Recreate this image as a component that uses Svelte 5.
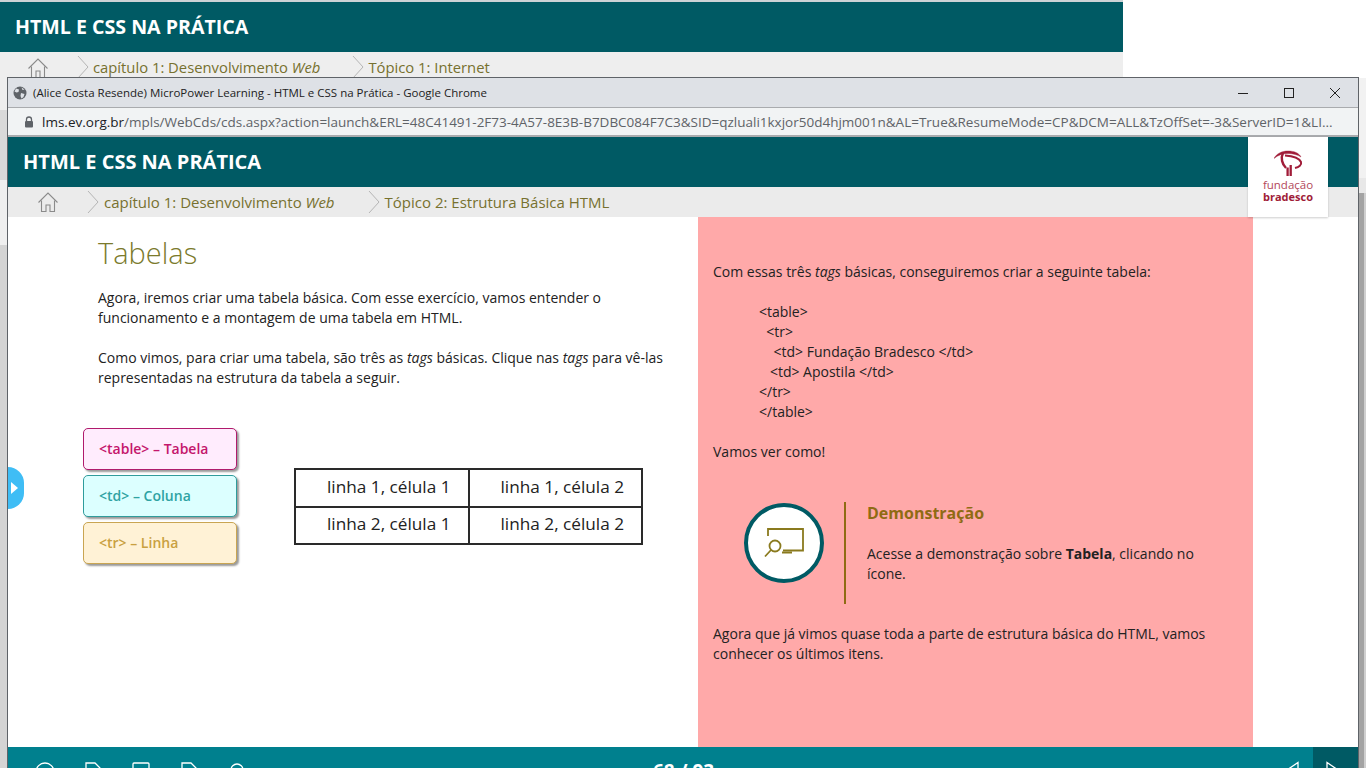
<script>
  const tags = [
    { label: "<table> – Tabela", kind: "pink" },
    { label: "<td> – Coluna", kind: "cyan" },
    { label: "<tr> – Linha", kind: "sand" }
  ];

  const rows = [
    ["linha 1, célula 1", "linha 1, célula 2"],
    ["linha 2, célula 1", "linha 2, célula 2"]
  ];

  const url =
    "/mpls/WebCds/cds.aspx?action=launch&ERL=48C41491-2F73-4A57-8E3B-B7DBC084F7C3&SID=qzluali1kxjor50d4hjm001n&AL=True&ResumeMode=CP&DCM=ALL&TzOffSet=-3&ServerID=1&LI...";
</script>

{#snippet home()}
  <svg class="home" width="22" height="22" viewBox="0 0 22 22" fill="none" stroke="#8a8a8a" stroke-width="1.1">
    <path d="M1.5 11.5 11 2l9.500 9.500" />
    <path d="M4.500 9.500V20.500h4.500v-6.500h4v6.500h4.500V9.500" />
  </svg>
{/snippet}

{#snippet chevron()}
  <svg class="chev" width="12" height="24" viewBox="0 0 12 24" fill="none" stroke="#b5b5b5" stroke-width="1">
    <path d="M1 1l10 11L1 23" />
  </svg>
{/snippet}

<div class="desktop">
  <div class="back-page">
    <header class="course back-course"><h1>HTML E CSS NA PRÁTICA</h1></header>
    <nav class="crumbs back-crumbs">
      {@render home()}
      {@render chevron()}
      <span>capítulo 1: Desenvolvimento <em>Web</em></span>
      {@render chevron()}
      <span>Tópico 1: Internet</span>
    </nav>
  </div>

  <div class="edge edge-left"></div>
  <div class="edge edge-right"></div>

  <section class="window">
    <div class="titlebar">
      <svg class="globe" width="14" height="14" viewBox="0 0 14 14">
        <circle cx="7" cy="7" r="6.500" fill="#5f6368" />
        <path d="M3 2.500l3 1-.5 2.500-2 .5-2-1zM8 7l3.500 1-1 3-2 1.500-1-2.500zM8.500 1.500l3 2-2 .5z" fill="#dee1e6" />
      </svg>
      <span class="title">(Alice Costa Resende) MicroPower Learning - HTML e CSS na Prática - Google Chrome</span>
      <div class="controls">
        <svg width="12" height="12" viewBox="0 0 12 12" stroke="#222" fill="none"><path d="M1 6.500h10" /></svg>
        <svg width="12" height="12" viewBox="0 0 12 12" stroke="#222" fill="none"><rect x="1.500" y="1.500" width="9" height="9" /></svg>
        <svg width="12" height="12" viewBox="0 0 12 12" stroke="#222" fill="none"><path d="M1 1l10 10M11 1L1 11" /></svg>
      </div>
    </div>

    <div class="addressbar">
      <svg width="10" height="12" viewBox="0 0 10 12">
        <path d="M2.500 5V3.500a2.500 2.500 0 0 1 5 0V5" fill="none" stroke="#5f6368" stroke-width="1.300" />
        <rect x="1" y="5" width="8" height="6.500" rx="1" fill="#5f6368" />
      </svg>
      <span class="url"><b>lms.ev.org.br</b>{url}</span>
    </div>

    <header class="course"><h1>HTML E CSS NA PRÁTICA</h1></header>
    <nav class="crumbs">
      {@render home()}
      {@render chevron()}
      <span>capítulo 1: Desenvolvimento <em>Web</em></span>
      {@render chevron()}
      <span>Tópico 2: Estrutura Básica HTML</span>
    </nav>

    <div class="logo">
      <svg width="29" height="26" viewBox="0 0 29 26" fill="none" stroke="#a01c38">
        <path d="M0 8.500C2.500 3.500 8 1 14 1c6 0 11 2 13 6-3-2-8-3.500-13-3.500-5 0-10 1.500-14 5z" fill="#a01c38" stroke-width=".4" />
        <path d="M9 3C6.500 8 8 14 12 18" stroke-width="2.400" />
        <path d="M11 5.500c7 .5 14 2 16 6.500 1 3-2 5-6 6" stroke-width="2" />
        <path d="M13.600 17.500V26M16.700 15v11" stroke-width="2.300" />
      </svg>
      <span class="logo-top">fundação</span>
      <span class="logo-bottom">bradesco</span>
    </div>

    <main class="content">
      <article class="lesson">
        <h2>Tabelas</h2>
        <p>
          Agora, iremos criar uma tabela básica. Com esse exercício, vamos entender o
          funcionamento e a montagem de uma tabela em HTML.
        </p>
        <p>
          Como vimos, para criar uma tabela, são três as <em>tags</em> básicas. Clique nas
          <em>tags</em> para vê-las representadas na estrutura da tabela a seguir.
        </p>

        <div class="exercise">
          <div class="tag-list">
            {#each tags as tag}
              <button class="tag {tag.kind}">{tag.label}</button>
            {/each}
          </div>
          <table>
            <tbody>
              {#each rows as row}
                <tr>
                  {#each row as cell}
                    <td>{cell}</td>
                  {/each}
                </tr>
              {/each}
            </tbody>
          </table>
        </div>
      </article>

      <aside class="panel">
        <p>Com essas três <em>tags</em> básicas, conseguiremos criar a seguinte tabela:</p>
        <pre class="code">&lt;table&gt;
  &lt;tr&gt;
    &lt;td&gt; Fundação Bradesco &lt;/td&gt;
   &lt;td&gt; Apostila &lt;/td&gt;
&lt;/tr&gt;
&lt;/table&gt;</pre>
        <p>Vamos ver como!</p>

        <div class="demo">
          <div class="demo-icon">
            <svg width="40" height="30" viewBox="0 0 40 30" fill="none" stroke="#8a7a1e" stroke-width="1.800">
              <path d="M4 8V1h35v21.500H19" />
              <circle cx="11" cy="18" r="5.500" />
              <path d="M7 22L1 28.500M18 24.500h10" />
            </svg>
          </div>
          <div class="demo-text">
            <h3>Demonstração</h3>
            <p>Acesse a demonstração sobre <b>Tabela</b>, clicando no ícone.</p>
          </div>
        </div>

        <p>
          Agora que já vimos quase toda a parte de estrutura básica do HTML, vamos conhecer
          os últimos itens.
        </p>
      </aside>
      <div class="gutter"></div>
    </main>

    <button class="side-tab" aria-label="Abrir menu"></button>

    <footer class="player">
      <div class="tools">
        <svg width="20" height="20" viewBox="0 0 20 20"><circle cx="10" cy="10" r="9" /></svg>
        <svg width="20" height="20" viewBox="0 0 20 20"><path d="M3 1h9l5 5v13H3z" /></svg>
        <svg width="20" height="20" viewBox="0 0 20 20"><rect x="2" y="1" width="16" height="18" rx="1" /></svg>
        <svg width="20" height="20" viewBox="0 0 20 20"><path d="M3 1h9l5 5v13H3z" /></svg>
        <svg width="20" height="20" viewBox="0 0 20 20"><path d="M4 8a6 6 0 0 1 12 0v10H4z" /></svg>
      </div>
      <span class="count">68 / 93</span>
      <div class="pager">
        <span class="prev">
          <svg width="16" height="22" viewBox="0 0 16 22"><path d="M15 1.500v19L1 11z" /></svg>
        </span>
        <span class="next">
          <svg width="16" height="22" viewBox="0 0 16 22"><path d="M1 1.500v19L15 11z" /></svg>
        </span>
      </div>
    </footer>
  </section>
</div>

<style>
  :global(body) {
    margin: 0;
    overflow: hidden;
    background: #fff;
  }

  .desktop {
    position: relative;
    width: 1366px;
    height: 768px;
    overflow: hidden;
    font-family: "Open Sans", "Liberation Sans", sans-serif;
    color: #222;
  }

  .back-page {
    width: 1123px;
    height: 76px;
    padding-top: 2px;
    background: #cdd3d6;
  }

  .course {
    height: 50px;
    flex: none;
    display: flex;
    align-items: center;
    background: #005a64;
    color: #fff;
  }

  .course h1 {
    margin: 0 0 0 15px;
    font-size: 20px;
    font-weight: 700;
    line-height: 1;
  }

  .back-course h1 {
    font-size: 19.600px;
  }

  .crumbs {
    height: 30px;
    flex: none;
    display: flex;
    align-items: center;
    padding-left: 29px;
    background: #ebebeb;
    font-size: 15px;
    color: #77712f;
    white-space: nowrap;
  }

  .crumbs .home {
    margin-right: 28px;
  }

  .crumbs .chev {
    margin-right: 5px;
  }

  .crumbs span + .chev {
    margin-left: 33px;
  }

  .back-crumbs {
    height: 26px;
    box-sizing: border-box;
    align-items: flex-start;
    padding: 3px 0 0 27px;
    background: #eee;
    font-size: 14.800px;
  }

  .back-crumbs .home {
    margin: 2px 28px 0 0;
  }

  .back-crumbs .chev {
    margin-right: 4px;
  }

  .back-crumbs span + .chev {
    margin-left: 32px;
  }

  .back-crumbs span {
    padding-top: 2px;
  }

  .edge {
    position: absolute;
    bottom: 0;
    width: 8px;
  }

  .edge-left {
    top: 52px;
    left: 0;
    background: linear-gradient(#eee 0 58px, #d9d9d9 58px 128px, #efefef 128px 193px, #d4d4d4 193px);
  }

  .edge-right {
    top: 78px;
    right: 0;
    width: 7px;
    background:
      linear-gradient(#f2f2f2 0 100px, #e8e8e8 100px 115px, transparent 115px),
      linear-gradient(90deg, #a3a3a3 0 5px, #cfcfcf 5px);
  }

  .window {
    position: absolute;
    left: 7px;
    top: 77px;
    width: 1352px;
    height: 691px;
    box-sizing: border-box;
    border: 1px solid #5f6368;
    border-bottom: 0;
    background: #fff;
    display: flex;
    flex-direction: column;
  }

  .titlebar {
    height: 30px;
    flex: none;
    display: flex;
    align-items: center;
    padding-left: 5px;
    background: #dee1e6;
    border-bottom: 1px solid #a9abae;
    box-sizing: border-box;
  }

  .title {
    margin-left: 6px;
    font-size: 11.500px;
    color: #222;
    white-space: nowrap;
  }

  .controls {
    margin-left: auto;
    display: flex;
    gap: 34px;
    padding-right: 17px;
  }

  .addressbar {
    height: 29px;
    flex: none;
    display: flex;
    align-items: center;
    gap: 8px;
    padding-left: 16px;
    background: #f1f3f4;
    border-bottom: 2px solid #a9abae;
    box-sizing: border-box;
  }

  .url {
    font-size: 13.500px;
    color: #5f6368;
    white-space: nowrap;
    overflow: hidden;
  }

  .url b {
    font-weight: 400;
    color: #202124;
  }

  .logo {
    position: absolute;
    left: 1240px;
    top: 59px;
    width: 80px;
    height: 80px;
    box-sizing: border-box;
    padding-top: 13px;
    background: #fff;
    box-shadow: 0 1px 2px rgba(0, 0, 0, 0.2);
    display: flex;
    flex-direction: column;
    align-items: center;
    color: #a01c38;
    line-height: 12px;
  }

  .logo svg {
    margin-bottom: 3px;
  }

  .logo-top {
    font-size: 11.500px;
    color: #b3475a;
  }

  .logo-bottom {
    font-size: 11px;
    font-weight: 700;
  }

  .content {
    flex: 1;
    min-height: 0;
    display: flex;
  }

  .lesson {
    width: 690px;
    flex: none;
    box-sizing: border-box;
    padding: 17px 30px 0 90px;
  }

  .lesson h2 {
    margin: 0 0 16px;
    font-size: 29px;
    font-weight: 300;
    line-height: 38px;
    color: #7b7a2c;
  }

  .lesson p,
  .panel p {
    margin: 0 0 20px;
    font-size: 14px;
    line-height: 20px;
    color: #222;
  }

  .exercise {
    display: flex;
    align-items: flex-start;
    margin: 40px 0 0 -15px;
  }

  .tag-list {
    display: flex;
    flex-direction: column;
    gap: 5px;
    width: 154px;
  }

  .tag {
    height: 42px;
    box-sizing: border-box;
    padding: 0 0 2px 15px;
    border: 1px solid;
    border-radius: 5px;
    box-shadow: 2px 2px 2px rgba(0, 0, 0, 0.4);
    font: 600 14px "Open Sans", "Liberation Sans", sans-serif;
    text-align: left;
  }

  .pink {
    background: #ffecfd;
    border-color: #b01a6c;
    color: #c4166c;
  }

  .cyan {
    background: #dcffff;
    border-color: #2f9c9c;
    color: #2fa3a3;
  }

  .sand {
    background: #fff2d6;
    border-color: #c9a552;
    color: #c9a040;
  }

  table {
    margin: 40px 0 0 57px;
    border-collapse: collapse;
    width: 349px;
    font-size: 17.200px;
    color: #222;
  }

  td {
    height: 37.500px;
    padding: 0 17px 3px 0;
    box-sizing: border-box;
    border: 2px solid #2a2a2a;
    text-align: right;
  }

  .panel {
    width: 555px;
    flex: none;
    box-sizing: border-box;
    padding: 45px 15px 0;
    background: #ffa9a9;
  }

  .panel .code {
    margin: 0 0 20px 46px;
    font: 14px/20px "Open Sans", "Liberation Sans", sans-serif;
    white-space: pre;
    color: #222;
  }

  .demo {
    display: flex;
    align-items: flex-start;
    margin: 40px 0 20px 31px;
  }

  .demo-icon {
    width: 80px;
    height: 80px;
    flex: none;
    box-sizing: border-box;
    border: 4px solid #005a64;
    border-radius: 50%;
    background: #fff;
    display: flex;
    align-items: center;
    justify-content: center;
    margin: 1px 20px 0 0;
  }

  .demo-text {
    border-left: 2px solid #8f6b14;
    height: 102px;
    padding-left: 21px;
    width: 344px;
  }

  .demo-text h3 {
    margin: 0 0 20px;
    padding-top: 1px;
    font-size: 16px;
    line-height: 21px;
    font-weight: 700;
    color: #8f6b14;
  }

  .gutter {
    flex: 1;
  }

  .side-tab {
    position: absolute;
    left: 0;
    top: 389px;
    width: 16px;
    height: 42px;
    padding: 0;
    border: 0;
    border-radius: 0 21px 21px 0;
    background: #3fbdf5;
  }

  .side-tab::after {
    content: "";
    position: absolute;
    left: 3px;
    top: 15px;
    border-left: 7px solid #fff;
    border-top: 6px solid transparent;
    border-bottom: 6px solid transparent;
  }

  .player {
    position: relative;
    height: 21px;
    flex: none;
    background: #00808e;
    overflow: hidden;
  }

  .tools {
    display: flex;
    gap: 28px;
    padding: 15px 0 0 27px;
  }

  .tools svg {
    fill: none;
    stroke: #fff;
    stroke-width: 1.300;
    flex: none;
  }

  .count {
    position: absolute;
    left: 645px;
    top: 11px;
    font-size: 19px;
    font-weight: 700;
    color: #fff;
  }

  .pager {
    position: absolute;
    right: 0;
    top: 0;
    bottom: 0;
    display: flex;
  }

  .prev,
  .next {
    width: 45px;
    display: flex;
    justify-content: center;
    padding-top: 14px;
  }

  .next {
    box-sizing: border-box;
    padding-right: 4px;
    background: #005a64;
  }

  .pager svg {
    fill: none;
    stroke: #fff;
    stroke-width: 1.300;
  }
</style>
